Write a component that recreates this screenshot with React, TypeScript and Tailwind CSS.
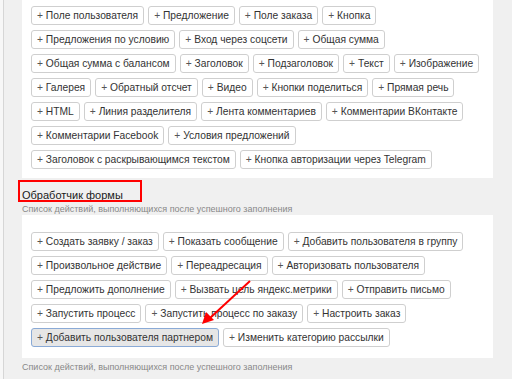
import React from 'react'

// Element palette rows (top block)
const blockRows = [
  ['Поле пользователя', 'Предложение', 'Поле заказа', 'Кнопка'],
  ['Предложения по условию', 'Вход через соцсети', 'Общая сумма'],
  ['Общая сумма с балансом', 'Заголовок', 'Подзаголовок', 'Текст', 'Изображение'],
  ['Галерея', 'Обратный отсчет', 'Видео', 'Кнопки поделиться', 'Прямая речь'],
  ['HTML', 'Линия разделителя', 'Лента комментариев', 'Комментарии ВКонтакте'],
  ['Комментарии Facebook', 'Условия предложений'],
  ['Заголовок с раскрывающимся текстом', 'Кнопка авторизации через Telegram'],
]

// Form handler action rows
const actionRows = [
  ['Создать заявку / заказ', 'Показать сообщение', 'Добавить пользователя в группу'],
  ['Произвольное действие', 'Переадресация', 'Авторизовать пользователя'],
  ['Предложить дополнение', 'Вызвать цель яндекс.метрики', 'Отправить письмо'],
  ['Запустить процесс', 'Запустить процесс по заказу', 'Настроить заказ'],
  ['Добавить пользователя партнером', 'Изменить категорию рассылки'],
]

function AddButton({ label, active }: { label: string; active?: boolean }) {
  return (
    <button
      className={`shrink-0 h-[19px] px-[5px] rounded-[3px] border text-[10.25px] leading-[17px] text-[#333] whitespace-nowrap ${
        active ? 'bg-[#e6e6e6] border-[#8aaad6]' : 'bg-white border-[#cfcfcf]'
      }`}
    >
      <span className="text-[#555]">+</span> {label}
    </button>
  )
}

function ButtonRows({ rows, activeLabel }: { rows: string[][]; activeLabel?: string }) {
  return (
    <div className="flex flex-col gap-[5px]">
      {rows.map((row, i) => (
        <div key={i} className="flex gap-[4px]">
          {row.map((label) => (
            <AddButton key={label} label={label} active={label === activeLabel} />
          ))}
        </div>
      ))}
    </div>
  )
}

export default function App() {
  return (
    <div className="relative w-[512px] h-[379px] overflow-hidden bg-[#f0f0f0] flex font-['Liberation_Sans',Arial,sans-serif]">
      {/* Left edge */}
      <div className="shrink-0 w-[3px] bg-[#f7f7f7]" />
      <div className="shrink-0 w-px bg-[#d6d6d6]" />

      <div className="flex-1 min-w-0 pl-[18px] pr-[19px]">
        {/* Blocks panel */}
        <div className="bg-white h-[178px] pt-[6px] pl-[9px] overflow-hidden">
          <ButtonRows rows={blockRows} />
        </div>

        {/* Form handler */}
        <div className="pt-[11px] h-[37px]">
          <h2 className="text-[11px] leading-[13px] text-[#1a1a1a]">Обработчик формы</h2>
          <p className="mt-[2px] text-[9px] leading-[11px] text-[#888]">
            Список действий, выполняющихся после успешного заполнения
          </p>
        </div>

        <div className="bg-white h-[143px] pt-[17px] pl-[9px] overflow-hidden">
          <ButtonRows rows={actionRows} activeLabel="Добавить пользователя партнером" />
        </div>

        <p className="mt-[4px] text-[9px] leading-[11px] text-[#888]">
          Список действий, выполняющихся после успешного заполнения
        </p>
      </div>

      {/* Annotation: red box */}
      <div className="absolute left-[18px] top-[180px] w-[124px] h-[22px] border-2 border-[#f00]" />

      {/* Annotation: red arrow */}
      <svg className="absolute left-0 top-0" width="512" height="379" viewBox="0 0 512 379">
        <line x1="250" y1="281" x2="210" y2="318" stroke="#f00" strokeWidth="2" />
        <polygon points="202,324 206,312 214,320" fill="#f00" />
      </svg>
    </div>
  )
}
